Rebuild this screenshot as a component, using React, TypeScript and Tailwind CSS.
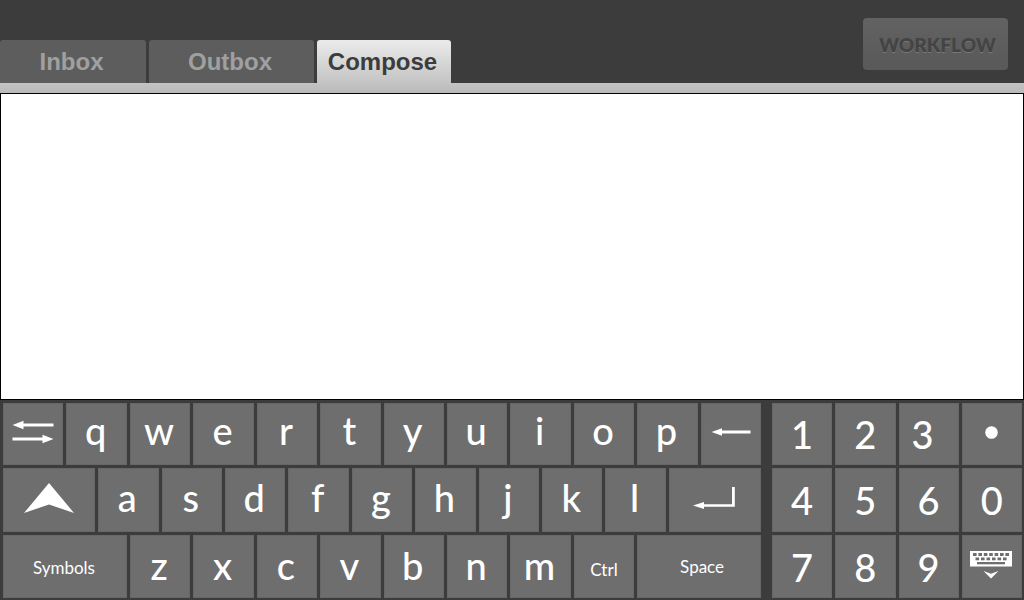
import type { ReactNode } from 'react';

const KEY =
  'flex items-center justify-center border border-[#676767] bg-[#6e6e6e] text-white active:bg-[#808080]';

type KeyProps = { label?: string; className?: string; children: ReactNode };

function Key({ label, className = 'col-span-2', children }: KeyProps) {
  return (
    <button type="button" aria-label={label} className={`${KEY} ${className}`}>
      {children}
    </button>
  );
}

function TabArrows() {
  return (
    <svg width="42" height="24" viewBox="0 0 42 24" fill="#fff" aria-hidden="true">
      <path d="M0.500 5 11.500 0.800V3.600H41.500V6.400H11.500V9.200Z" />
      <path d="M41.500 19 30.500 14.800V17.600H0.500V20.400H30.500V23.200Z" />
    </svg>
  );
}

function Backspace() {
  return (
    <svg width="40" height="8" viewBox="0 0 40 8" fill="#fff" aria-hidden="true">
      <path d="M0.500 4 11 0.200V2.600H39.500V5.400H11V7.800Z" />
    </svg>
  );
}

function Shift() {
  return (
    <svg width="50" height="30" viewBox="0 0 50 30" fill="#fff" aria-hidden="true">
      <path d="M25 0 50 30 25 21.500 0 30Z" />
    </svg>
  );
}

function Enter() {
  return (
    <svg width="42" height="22" viewBox="0 0 42 22" fill="#fff" aria-hidden="true">
      <path d="M0 18.500 11 14.900V17.300H39V0H41.800V19.800H11V22Z" />
    </svg>
  );
}

function HideKeyboard() {
  const upper = [3, 8.4, 13.800, 19.200, 24.600, 30, 35.400];
  const lower = [5.500, 11, 16.500, 22, 27.500, 33];
  return (
    <svg width="42" height="28" viewBox="0 0 42 28" aria-hidden="true">
      <rect width="42" height="15.500" fill="#fff" />
      <g fill="#6e6e6e">
        {upper.map((x) => (
          <rect key={x} x={x} y="2" width="3.600" height="3" />
        ))}
        {lower.map((x) => (
          <rect key={x} x={x} y="6.500" width="3.600" height="2.800" />
        ))}
        <rect x="7" y="11" width="28" height="2.300" />
      </g>
      <path d="M13.500 20 21 22.700 28.500 20 21 27.500Z" fill="#fff" />
    </svg>
  );
}

const TABS = [
  { name: 'Inbox', style: 'w-[146px] bg-[#5d5d5d] text-[#a0a0a0]' },
  { name: 'Outbox', style: 'w-[165px] bg-[#5d5d5d] text-[#a0a0a0]' },
  { name: 'Compose', style: 'w-[134px] bg-linear-to-b from-[#ebebeb] to-[#c4c4c4] text-[#3c3c3c]' },
];

const letters = (row: string, pad: string) =>
  row.split('').map((c) => (
    <Key key={c} className={`col-span-2 pr-0.5 ${pad}`}>
      {c}
    </Key>
  ));

const digits = (row: string) =>
  row.split('').map((c) => (
    <Key key={c} className={c === '3' ? 'pr-3' : 'pr-0'}>
      {c}
    </Key>
  ));

export default function App() {
  return (
    <div className="flex min-h-screen flex-col bg-[#3c3c3c]">
      <header className="flex justify-between">
        <nav className="flex items-end gap-[3px] pt-10 font-['Liberation_Sans',sans-serif] text-2xl font-bold">
          {TABS.map((t) => (
            <button
              key={t.name}
              type="button"
              aria-current={t.name === 'Compose' ? 'page' : undefined}
              className={`h-[43px] rounded-t-[3px] pr-[3px] ${t.style}`}
            >
              {t.name}
            </button>
          ))}
        </nav>
        <button
          type="button"
          className="mt-[18px] mr-4 h-[52px] w-[145px] rounded bg-linear-to-b from-[#626262] to-[#595959] pt-[3px] pl-1 font-[Lato,sans-serif] text-[19px] font-extrabold text-[#444] [text-shadow:0_1px_0_#777]"
        >
          WORKFLOW
        </button>
      </header>
      <div className="h-2.5 bg-linear-to-b from-[#c4c4c4] to-[#b9b9b9]" />
      <textarea
        aria-label="Message"
        className="block min-h-40 w-full flex-1 resize-none border border-black bg-white p-3 font-['Liberation_Sans',sans-serif] text-xl outline-none"
      />
      <div className="flex gap-[11px] pt-[3px] pr-[2px] pb-[2px] pl-[3px] font-[Lato,sans-serif] text-[38px] leading-none font-medium">
        <div className="grid flex-[758] grid-cols-24 grid-rows-[62px_64px_63px] gap-[3px]">
          <Key label="Tab" className="col-span-2 pb-1">
            <TabArrows />
          </Key>
          {letters('qwertyuiop', 'pb-2')}
          <Key label="Backspace" className="col-span-2 pb-1">
            <Backspace />
          </Key>

          <Key label="Shift" className="col-span-3 pb-1">
            <Shift />
          </Key>
          {letters('asdfghjkl', 'pb-1.5')}
          <Key label="Enter" className="col-span-3 pr-0.5 pb-1">
            <Enter />
          </Key>

          <Key className="col-span-4 pt-0.5 pr-0.5 text-[17px] font-normal">Symbols</Key>
          {letters('zxcvbnm', 'pb-1')}
          <Key className="col-span-2 pt-1.5 text-[17px] font-normal">Ctrl</Key>
          <Key className="col-span-4 pl-1.5 text-[17px] font-normal">Space</Key>
        </div>
        <div className="grid flex-[250] grid-cols-4 grid-rows-[62px_64px_63px] gap-[3px]">
          {digits('123')}
          <Key label="Period" className="pb-1">
            <svg width="13" height="13" viewBox="0 0 13 13" aria-hidden="true">
              <circle cx="6.500" cy="6.500" r="6.300" fill="#fff" />
            </svg>
          </Key>
          {digits('4560789')}
          <Key label="Hide keyboard" className="pr-0.5 pb-1">
            <HideKeyboard />
          </Key>
        </div>
      </div>
    </div>
  );
}
